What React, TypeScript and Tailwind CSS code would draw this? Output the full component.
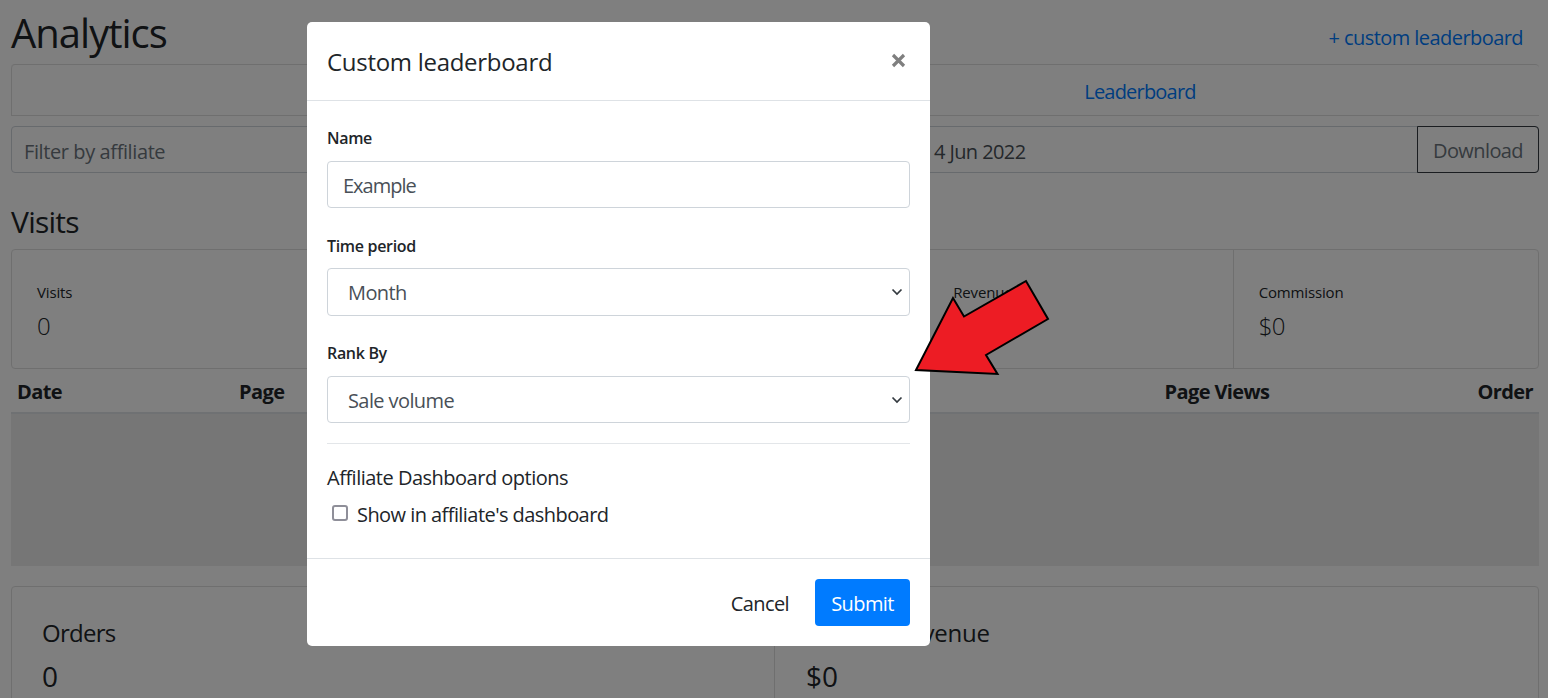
const font = "font-['Open_Sans',sans-serif]";

function StatCell({ label, value }: { label?: string; value?: string }) {
  return (
    <div className="flex-1 border-r border-[#dfdfdf] last:border-r-0 pl-[25px] pt-[31px]">
      <div className="text-[15px] leading-[22px] tracking-[-0.01em] text-[#212529]">{label}</div>
      <div className="mt-[7px] text-[24px] leading-[32px] font-light tracking-[-0.02em] text-[#212529]">{value}</div>
    </div>
  );
}

function Field({ label, children, className }: { label: string; children: React.ReactNode; className?: string }) {
  return (
    <div className={className}>
      <label className="block text-[16px] leading-[22px] font-semibold tracking-[-0.02em] text-[#212529]">{label}</label>
      {children}
    </div>
  );
}

function Select({ value, className }: { value: string; className?: string }) {
  return (
    <div className={`relative ${className ?? ""}`}>
      <select
        defaultValue={value}
        className="block w-full h-full appearance-none rounded border border-[#ced4da] bg-white pl-[20px] pt-[2px] text-[20px] tracking-[-0.03em] text-[#495057]"
      >
        <option>{value}</option>
      </select>
      <svg className="absolute right-[7px] top-1/2 -mt-[4px]" width="12" height="8" viewBox="0 0 12 8" fill="none">
        <path d="M1.5 1.5 L6 6 L10.5 1.5" stroke="#343a40" strokeWidth="1.7" />
      </svg>
    </div>
  );
}

export default function App() {
  return (
    <div className={`relative h-[698px] w-[1548px] overflow-hidden bg-white ${font}`}>
      {/* page behind the modal */}
      <div className="pl-[11px] pr-[9px]">
        <div className="flex h-[64px] items-start justify-between">
          <h1 className="mt-[8px] text-[40px] leading-[50px] tracking-[-0.025em] text-[#212529]">Analytics</h1>
          <a className="mt-[25px] mr-[16px] text-[20px] leading-[26px] tracking-[-0.028em] text-[#007bff]">+ custom leaderboard</a>
        </div>

        <div className="grid h-[52px] grid-cols-2 rounded-t border-x-0 border-t border-b border-[#dfdfdf]">
          <div className="rounded-tl border-l border-[#dfdfdf]" />
          <div className="pr-[34px] pt-[14px] text-center text-[20px] leading-[26px] tracking-[-0.04em] text-[#007bff]">Leaderboard</div>
        </div>

        <div className="mt-[10px] flex h-[47px] rounded border border-[#ced4da]">
          <div className="w-[703px] shrink-0 pl-[12px] pt-[12px] text-[20px] leading-[26px] tracking-[-0.02em] text-[#6c757d]">Filter by affiliate</div>
          <div className="flex-1 pl-[219px] pt-[12px] text-[20px] leading-[26px] tracking-[-0.03em] text-[#495057]">4 Jun 2022</div>
          <button className="w-[122px] rounded-r border border-[#343a40] -m-px pt-[2px] text-[20px] tracking-[-0.03em] text-[#6c757d]">Download</button>
        </div>

        <h2 className="mt-[29px] h-[47px] text-[30px] leading-[40px] tracking-[-0.025em] text-[#212529]">Visits</h2>

        <div className="flex h-[120px] rounded border border-[#dfdfdf]">
          <StatCell label="Visits" value="0" />
          <StatCell />
          <StatCell />
          <StatCell label="Revenue" />
          <StatCell label="Commission" value="$0" />
        </div>

        <div className="flex h-[45px] items-center justify-between border-b-2 border-[#dee2e6] px-[6px] pt-[2px] text-[20px] font-bold tracking-[-0.03em] text-[#212529]">
          <div className="flex">
            <span className="w-[222px]">Date</span>
            <span>Page</span>
          </div>
          <div className="flex">
            <span className="mr-[208px]">Page Views</span>
            <span>Order</span>
          </div>
        </div>
        <div className="h-[152px] bg-[#ececec]" />

        <div className="mt-[20px] flex h-[200px] rounded border border-[#dfdfdf]">
          <div className="flex-1 border-r border-[#dfdfdf] pl-[30px] pt-[30px]">
            <div className="text-[24px] leading-[32px] tracking-[-0.03em] text-[#212529]">Orders</div>
            <div className="mt-[8px] text-[28px] leading-[38px] text-[#212529]">0</div>
          </div>
          <div className="flex-1 pl-[31px] pt-[30px]">
            <div className="text-[24px] leading-[32px] tracking-[-0.01em] text-[#212529]">Affiliate Revenue</div>
            <div className="mt-[8px] text-[28px] leading-[38px] text-[#212529]">$0</div>
          </div>
        </div>
      </div>

      <div className="absolute inset-0 bg-black/50" />

      {/* modal */}
      <div className="absolute left-[307px] top-[22px] h-[624px] w-[623px] rounded-[5px] bg-white">
        <div className="flex h-[79px] items-start justify-between border-b border-[#dee2e6] pl-[20px] pr-[20px]">
          <h5 className="mt-[23px] text-[24px] leading-[34px] tracking-[-0.012em] text-[#212529]">Custom leaderboard</h5>
          <svg className="mt-[31px] mr-[4px]" width="15" height="15" viewBox="0 0 15 15">
            <path d="M2 2 L13 13 M13 2 L2 13" stroke="#7f7f7f" strokeWidth="3.2" />
          </svg>
        </div>

        <div className="px-[20px] pt-[26px]">
          <Field label="Name">
            <input
              readOnly
              value="Example"
              className="mt-[12px] block h-[47px] w-full rounded border border-[#ced4da] bg-white px-[15px] pt-[2px] text-[20px] tracking-[-0.05em] text-[#495057] outline-none"
            />
          </Field>
          <Field label="Time period" className="mt-[27px]">
            <Select value="Month" className="mt-[11px] h-[48px]" />
          </Field>
          <Field label="Rank By" className="mt-[26px]">
            <Select value="Sale volume" className="mt-[12px] h-[47px]" />
          </Field>
          <div className="mt-[20px] border-t border-[#e3e6e9]" />
          <div className="mt-[20px] text-[20px] leading-[28px] tracking-[-0.025em] text-[#212529]">Affiliate Dashboard options</div>
          <div className="mt-[9px] flex items-center pl-[5px]">
            <span className="-mt-[5px] h-[16px] w-[16px] rounded-[3px] border-2 border-[#8f8f99] bg-white" />
            <span className="ml-[9px] text-[20px] leading-[28px] tracking-[-0.028em] text-[#212529]">Show in affiliate's dashboard</span>
          </div>
        </div>

        <div className="absolute bottom-0 left-0 right-0 flex h-[88px] items-center justify-end border-t border-[#dee2e6] pr-[20px]">
          <span className="mr-[26px] pt-[2px] text-[20px] tracking-[-0.03em] text-[#212529]">Cancel</span>
          <button className="h-[47px] w-[95px] rounded bg-[#007bff] pt-[2px] text-[20px] tracking-[-0.03em] text-white">Submit</button>
        </div>
      </div>

      {/* red annotation arrow */}
      <svg className="absolute left-0 top-0" width="1548" height="698" viewBox="0 0 1548 698" fill="none">
        <path
          d="M916 370 L953 298 L964 316.5 L1026 281 L1048 319 L986 355 L997.5 374 Z"
          fill="#ed1c24"
          stroke="#000"
          strokeWidth="2"
        />
      </svg>
    </div>
  );
}
